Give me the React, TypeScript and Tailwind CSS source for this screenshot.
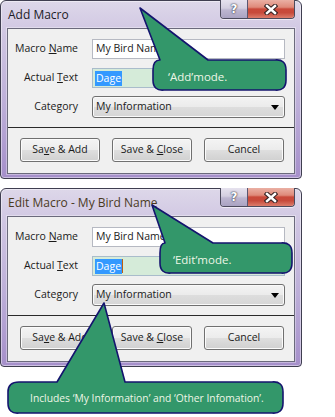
import React from "react";

const ui = "font-['Open_Sans',sans-serif]";

function TitleButtons() {
  return (
    <div className="ml-auto -mt-px flex h-[19px] rounded-b-[4px] border border-t-0 border-[#4c4a5c] overflow-hidden shadow-[0_1px_0_rgba(255,255,255,0.6)]">
      <div className="w-[27px] h-full flex items-center justify-center border-r border-[#5a5670] bg-[linear-gradient(to_bottom,#e6e2ee_0%,#d4cfe0_45%,#bdb6d0_55%,#aaa3c2_100%)]">
        <span className="text-white font-bold text-[12px] leading-none font-['DejaVu_Sans',sans-serif] [text-shadow:0_0_2px_#303040,0_0_1px_#303040]">?</span>
      </div>
      <div className="w-[46px] h-full flex items-center justify-center bg-[linear-gradient(to_bottom,#eab0a4_0%,#df8a7a_40%,#c9493a_50%,#c74a3b_70%,#dc7d6c_100%)]">
        <svg width="14" height="11" viewBox="0 0 14 11">
          <g strokeLinecap="square">
            <path d="M3 2 L11 9 M11 2 L3 9" stroke="#3a2626" strokeWidth="4.6" />
            <path d="M3 2 L11 9 M11 2 L3 9" stroke="#ffffff" strokeWidth="2.4" />
          </g>
        </svg>
      </div>
    </div>
  );
}

function Btn({ children }: { children: React.ReactNode }) {
  return (
    <div className="w-[80px] h-[24px] rounded-[3px] border border-[#707070] flex items-center justify-center bg-[linear-gradient(to_bottom,#f4f4f4_0%,#ececec_48%,#dedede_52%,#d0d0d0_100%)] shadow-[inset_0_0_0_1px_#fbfbfb] text-[#1a1a1a]">
      {children}
    </div>
  );
}

function Win({ title, titleClass, caret }: { title: string; titleClass: string; caret?: boolean }) {
  return (
    <div className="w-[302px] h-[179px] flex flex-col rounded-t-[6px] rounded-b-[4px] border border-[#3f3e50] bg-[linear-gradient(to_bottom,#ddd7e9_0%,#cfc5e2_20%,#bcaed8_60%,#a58fca_100%)] px-[6px] pb-[4px] shadow-[inset_0_0_0_1px_rgba(255,255,255,0.45)]">
      <div className="h-[27px] flex items-start">
        <div className={`pt-[6px] pl-[1px] text-[12px] leading-[16px] ${titleClass}`}>{title}</div>
        <TitleButtons />
      </div>
      <div className="flex-1 flex flex-col border border-[#6b6a7c] bg-[#f0f0f0] text-[10.5px] text-[#1a1a1a] shadow-[0_0_0_1px_rgba(255,255,255,0.35)]">
        <div className="pt-[10px] flex flex-col">
          <div className="flex items-center h-[20px]">
            <div className="w-[70px] text-right">
              Macro <span className="underline underline-offset-[1px]">N</span>ame
            </div>
            <div className="ml-[14px] w-[193px] h-[20px] bg-white border border-[#b6b9c2] flex items-center px-[3px]">
              My Bird Name
            </div>
          </div>
          <div className="flex items-center h-[20px] mt-[9px]">
            <div className="w-[70px] text-right">
              Actual <span className="underline underline-offset-[1px]">T</span>ext
            </div>
            <div className="ml-[14px] w-[193px] h-[20px] bg-[#d5ebd9] border border-[#a9bccb] flex items-center px-[2px]">
              <span className="bg-[#3399ff] text-white leading-[15px] px-[1px]">Dage</span>
              {caret && <span className="w-px h-[14px] bg-[#c06010]" />}
            </div>
          </div>
          <div className="flex items-center h-[22px] mt-[8px]">
            <div className="w-[70px] text-right">
              Cate<span className="underline underline-offset-[1px]">g</span>ory
            </div>
            <div className="ml-[14px] w-[193px] h-[22px] rounded-[3px] border border-[#707070] bg-[linear-gradient(to_bottom,#f3f3f3_0%,#ebebeb_50%,#dddddd_51%,#d6d6d6_100%)] shadow-[inset_0_0_0_1px_#fafafa] flex items-center pl-[3px] pr-[5px]">
              <span>My Information</span>
              <svg className="ml-auto" width="8" height="5" viewBox="0 0 8 5">
                <path d="M0 0 H8 L4 5 Z" fill="#000" />
              </svg>
            </div>
          </div>
        </div>
        <div className="mt-[9px] h-px bg-[#2a2a2a]" />
        <div className="mt-[10px] flex gap-[12px] pl-[12px]">
          <Btn>
            <span>
              Sa<span className="underline underline-offset-[1px]">v</span>e &amp; Add
            </span>
          </Btn>
          <Btn>
            <span>
              Save &amp; <span className="underline underline-offset-[1px]">C</span>lose
            </span>
          </Btn>
          <Btn>
            <span>Cancel</span>
          </Btn>
        </div>
      </div>
    </div>
  );
}

export default function App() {
  return (
    <div className={`relative w-[335px] h-[417px] bg-white overflow-hidden ${ui}`}>
      <div className="flex flex-col gap-[9px]">
        <Win title="Add Macro" titleClass="text-[#1c1c28]" />
        <Win title="Edit Macro - My Bird Name" titleClass="text-[#4a3a1e]" caret />
      </div>

      <svg className="absolute inset-0 pointer-events-none" width="335" height="417" viewBox="0 0 335 417">
        <g fill="#33976a" stroke="#14146e" strokeWidth="1.6" strokeLinejoin="round">
          <path d="M140 8 L208 60 H275 Q286 59 286 70 V80 Q286 91 275 90 H164 Q153 91 153 80 V70 Q153 60 160 60 Z" />
          <path d="M152 205 L213 243 H281 Q292 242 292 253 V263 Q292 274 281 273 H171 Q160 274 160 263 V253 Q160 243 165 243 Z" />
          <path d="M104 303 L125 382 H272 Q283 381 283 392 V403 Q283 414 272 413 H19 Q8 414 8 403 V392 Q8 382 19 382 H57 Z" />
        </g>
      </svg>
      <div className="absolute left-[168px] top-[69px] text-[11.5px] leading-[16px] text-[#eef6e6]">‘Add’mode.</div>
      <div className="absolute left-[173px] top-[252px] text-[11.5px] leading-[16px] text-[#eef6e6]">‘Edit’mode.</div>
      <div className="absolute left-[30px] top-[390px] text-[10.3px] leading-[16px] text-[#eef6e6] whitespace-nowrap">
        Includes ‘My Information’ and ‘Other Infomation’.
      </div>
    </div>
  );
}
